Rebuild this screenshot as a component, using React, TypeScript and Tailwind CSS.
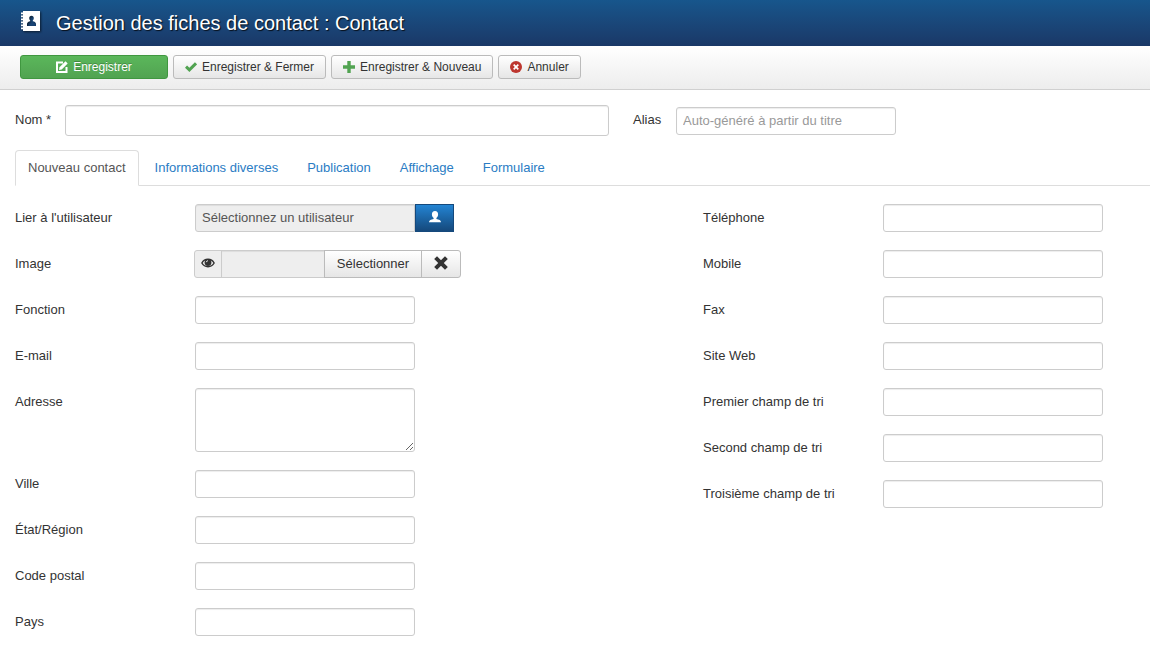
import { useId, useState } from 'react';
import type { ReactNode } from 'react';
import clsx from 'clsx';

const AddressBookIcon = () => (
  <svg className="h-5 w-5 shrink-0 drop-shadow-[1px_1px_1px_rgba(0,0,0,0.6)]" viewBox="0 0 20 20" fill="currentColor" aria-hidden>
    <path
      fillRule="evenodd"
      d="M3 0h17v20H3zM11.500 4.800C10 4.800 9.200 5.900 9.200 7.200c0 1 .4 1.800 1 2.300v.8c-1.800.3-3.200 1.200-3.200 2.700v2h9v-2c0-1.500-1.400-2.400-3.200-2.700v-.8c.6-.5 1-1.300 1-2.300 0-1.300-.8-2.400-2.300-2.400z"
    />
    <path d="M1 1.500h2v1.700H1zM1 4.500h2v1.700H1zM1 7.500h2v1.700H1zM1 10.500h2v1.700H1zM1 13.500h2v1.700H1zM1 16.500h2v1.700H1z" />
  </svg>
);

const EditIcon = () => (
  <svg className="h-3 w-3 shrink-0" viewBox="0 0 12 12" aria-hidden>
    <path fill="none" stroke="currentColor" strokeWidth="2" d="M7 1.500H1V11h9.500V6" />
    <path fill="currentColor" d="M3.500 6.300 9.500.3l2.200 2.200-6 6-2.700.6z" />
  </svg>
);

const CheckIcon = () => (
  <svg className="h-3 w-3 shrink-0 text-[#51a351]" viewBox="0 0 12 12" fill="none" stroke="currentColor" strokeWidth="3" aria-hidden>
    <path d="M1 5.600 4.400 8.900 11 2.300" />
  </svg>
);

const PlusIcon = () => (
  <svg className="h-3 w-3 shrink-0 text-[#51a351]" viewBox="0 0 12 12" fill="currentColor" aria-hidden>
    <path d="M4.300 0h3.400v4.300H12v3.400H7.700V12H4.300V7.700H0V4.300h4.300z" />
  </svg>
);

const CancelIcon = () => (
  <svg className="h-3 w-3 shrink-0" viewBox="0 0 12 12" aria-hidden>
    <circle cx="6" cy="6" r="6" fill="#bd362f" />
    <path stroke="#fff" strokeWidth="1.700" d="m3.700 3.700 4.600 4.600m0-4.600L3.700 8.300" />
  </svg>
);

const UserIcon = () => (
  <svg className="h-3 w-3" viewBox="0 0 12 12" fill="currentColor" aria-hidden>
    <path d="M6 0C3.900 0 2.900 1.400 2.900 3.200c0 1.700.7 3 1.700 3.800v1C2 8.500 0 9.200 0 11.200h12c0-2-2-2.700-4.600-3.200V7c1-.8 1.700-2.100 1.700-3.800C9.100 1.400 8.100 0 6 0z" />
  </svg>
);

const EyeIcon = () => (
  <svg className="h-3 w-[14px]" viewBox="0 0 14 12" aria-hidden>
    <path fill="none" stroke="currentColor" strokeWidth="1.500" d="M.9 6C3.600 1.100 10.400 1.100 13.100 6 10.400 10.900 3.600 10.900.9 6z" />
    <circle cx="7" cy="5.500" r="3.400" fill="currentColor" />
    <path fill="none" stroke="#eee" d="M5.300 5.200c.1-.9.700-1.400 1.600-1.500" />
  </svg>
);

const RemoveIcon = () => (
  <svg className="h-[14px] w-[14px]" viewBox="0 0 14 14" fill="none" stroke="currentColor" strokeWidth="4" aria-hidden>
    <path d="m1.600 1.600 10.800 10.800m0-10.800L1.600 12.400" />
  </svg>
);

const inputClass =
  'block border border-[#ccc] px-[6px] text-[13px] leading-[18px] text-[#555] shadow-[inset_0_1px_1px_rgba(0,0,0,0.075)] placeholder:text-[#999] read-only:bg-[#eee] focus:border-[#52a8ec] focus:outline-none';

const buttonClass =
  'border border-[#bbb] bg-linear-to-b from-white to-[#e6e6e6] text-[#333] hover:to-[#f2f2f2]';

type ToolbarButtonProps = {
  icon: ReactNode;
  primary?: boolean;
  children: ReactNode;
};

const ToolbarButton = ({ icon, primary, children }: ToolbarButtonProps) => (
  <button
    type="button"
    className={clsx(
      'flex h-6 items-center justify-center gap-[5px] rounded-[3px] text-[12px]',
      primary
        ? 'w-[148px] border border-[#409740] bg-linear-to-b from-[#5bb75b] to-[#51a351] text-white [text-shadow:0_-1px_0_rgba(0,0,0,0.25)]'
        : `${buttonClass} px-[11px]`,
    )}
  >
    {icon}
    <span>{children}</span>
  </button>
);

type FieldProps = {
  label: string;
  children?: (id: string) => ReactNode;
};

const Field = ({ label, children }: FieldProps) => {
  const id = useId();

  return (
    <div className="mb-[18px] flex items-start">
      <label htmlFor={id} className="w-[180px] shrink-0 pt-[5px]">
        {label}
      </label>
      {children ? children(id) : <input id={id} type="text" className={clsx(inputClass, 'h-7 w-[220px] rounded-[3px]')} />}
    </div>
  );
};

const tabs = ['Nouveau contact', 'Informations diverses', 'Publication', 'Affichage', 'Formulaire'];

export default function App() {
  const [activeTab, setActiveTab] = useState(tabs[0]);

  return (
    <div className="min-h-screen bg-white font-['Liberation_Sans',Arial,sans-serif] text-[13px] leading-[18px] text-[#333]">
      <header className="flex h-[46px] items-center gap-4 bg-linear-to-b from-[#17568c] to-[#1a3867] px-5 pb-1 text-white">
        <AddressBookIcon />
        <h1 className="pt-[3px] text-[20px] leading-6 [text-shadow:1px_1px_1px_rgba(0,0,0,0.8)]">
          Gestion des fiches de contact : Contact
        </h1>
      </header>

      <div className="flex h-11 items-center gap-[5px] border-b border-[#d0d0d0] bg-linear-to-b from-white to-[#ededed] px-5 pb-[2px]">
        <ToolbarButton primary icon={<EditIcon />}>
          Enregistrer
        </ToolbarButton>
        <ToolbarButton icon={<CheckIcon />}>Enregistrer &amp; Fermer</ToolbarButton>
        <ToolbarButton icon={<PlusIcon />}>Enregistrer &amp; Nouveau</ToolbarButton>
        <ToolbarButton icon={<CancelIcon />}>Annuler</ToolbarButton>
      </div>

      <form className="px-[15px] pt-[15px]">
        <div className="flex items-center">
          <label htmlFor="nom" className="w-[50px] pb-px">
            Nom *
          </label>
          <input id="nom" type="text" className={clsx(inputClass, 'h-[31px] w-[544px] rounded-[3px]')} />
          <label htmlFor="alias" className="ml-6 w-[43px] pb-px">
            Alias
          </label>
          <input
            id="alias"
            type="text"
            placeholder="Auto-généré à partir du titre"
            className={clsx(inputClass, 'h-7 w-[220px] rounded-[3px]')}
          />
        </div>

        <div role="tablist" className="-mr-[15px] mt-[14px] flex gap-[3px] border-b border-[#ddd]">
          {tabs.map((tab) => (
            <button
              key={tab}
              type="button"
              role="tab"
              aria-selected={tab === activeTab}
              onClick={() => setActiveTab(tab)}
              className={clsx(
                '-mb-px rounded-t-[4px] border px-3 py-2',
                tab === activeTab ? 'border-[#ddd] border-b-white bg-white text-[#555]' : 'border-transparent text-[#2a7cc4]',
              )}
            >
              {tab}
            </button>
          ))}
        </div>

        <div className="grid grid-cols-[43fr_27fr] pt-[18px]">
          <div>
            <Field label="Lier à l'utilisateur">
              {(id) => (
                <div className="flex h-7">
                  <input
                    id={id}
                    type="text"
                    readOnly
                    value="Sélectionnez un utilisateur"
                    className={clsx(inputClass, 'w-[220px] rounded-l-[3px]')}
                  />
                  <button
                    type="button"
                    aria-label="Sélectionnez un utilisateur"
                    className="flex w-[39px] items-center justify-center border border-[#15497c] bg-linear-to-b from-[#2384d3] to-[#15497c] pb-[2px] text-white"
                  >
                    <UserIcon />
                  </button>
                </div>
              )}
            </Field>
            <Field label="Image">
              {(id) => (
                <div className="-ml-px flex h-7">
                  <span className="flex w-7 items-center justify-center rounded-l-[3px] border border-[#ccc] bg-[#eee] pb-[2px]">
                    <EyeIcon />
                  </span>
                  <input id={id} type="text" readOnly className={clsx(inputClass, '-ml-px w-[104px]')} />
                  <button type="button" className={clsx(buttonClass, '-ml-px w-[98px]')}>
                    Sélectionner
                  </button>
                  <button
                    type="button"
                    aria-label="Effacer"
                    className={clsx(buttonClass, '-ml-px flex w-10 items-center justify-center rounded-r-[3px] pb-[2px]')}
                  >
                    <RemoveIcon />
                  </button>
                </div>
              )}
            </Field>
            <Field label="Fonction" />
            <Field label="E-mail" />
            <Field label="Adresse">
              {(id) => <textarea id={id} className={clsx(inputClass, 'h-16 w-[220px] rounded-[3px] py-1')} />}
            </Field>
            <Field label="Ville" />
            <Field label="État/Région" />
            <Field label="Code postal" />
            <Field label="Pays" />
          </div>

          <div>
            <Field label="Téléphone" />
            <Field label="Mobile" />
            <Field label="Fax" />
            <Field label="Site Web" />
            <Field label="Premier champ de tri" />
            <Field label="Second champ de tri" />
            <Field label="Troisième champ de tri" />
          </div>
        </div>
      </form>
    </div>
  );
}
